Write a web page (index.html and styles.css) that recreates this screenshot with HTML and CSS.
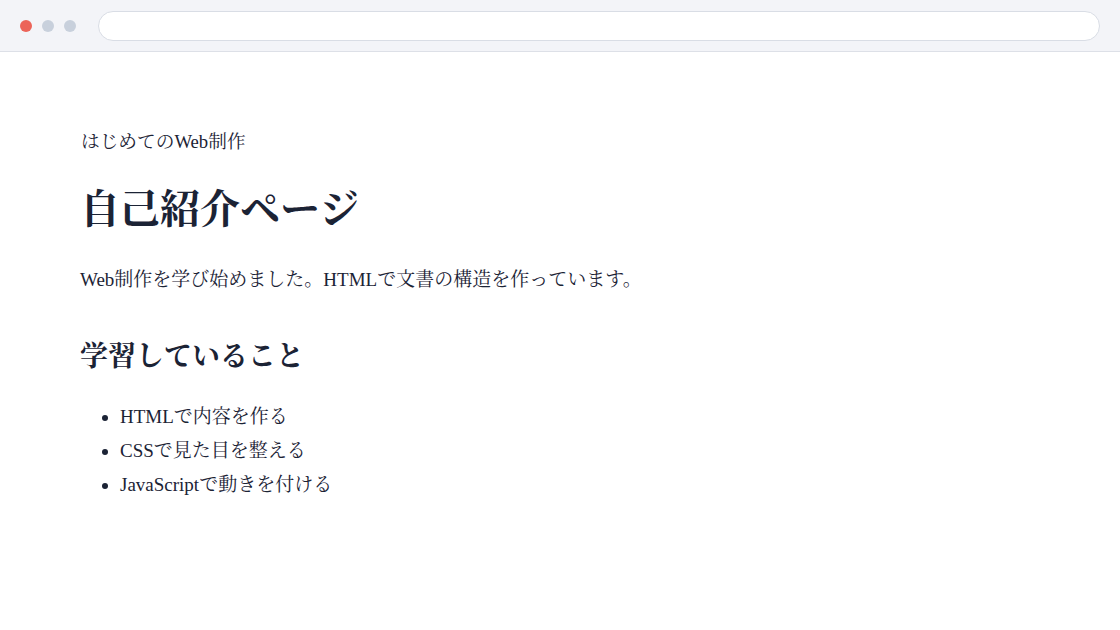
FILE: index.html
```html
<!DOCTYPE html>
<html lang="ja">
<head>
    <meta charset="UTF-8">
    <meta name="viewport" content="width=device-width, initial-scale=1.0">
    <title>自己紹介ページ</title>
    <link rel="stylesheet" href="styles.css">
</head>
<body>
    <div class="browser-bar">
        <div class="dots">
            <span class="dot red"></span>
            <span class="dot"></span>
            <span class="dot"></span>
        </div>
        <div class="address"></div>
    </div>

    <main class="page">
        <p class="lead">はじめてのWeb制作</p>
        <h1>自己紹介ページ</h1>
        <p class="intro">Web制作を学び始めました。HTMLで文書の構造を作っています。</p>

        <h2>学習していること</h2>
        <ul class="study-list">
            <li>HTMLで内容を作る</li>
            <li>CSSで見た目を整える</li>
            <li>JavaScriptで動きを付ける</li>
        </ul>
    </main>
</body>
</html>
```

FILE: styles.css
```css
*{
    margin: 0;
    padding: 0;
    box-sizing: border-box;
}
body{
    width: 1120px;
    height: 630px;
    overflow: hidden;
    background: #fff;
    color: #1b2335;
    font-family: "Liberation Serif", "Noto Serif CJK JP", "Noto Sans CJK JP", serif;
}
.browser-bar{
    height: 52px;
    display: flex;
    align-items: center;
    gap: 22px;
    padding: 0 20px;
    background: #f3f4f8;
    border-bottom: 1px solid #dde0e7;
}
.dots{
    display: flex;
    gap: 10px;
}
.dot{
    width: 12px;
    height: 12px;
    border-radius: 50%;
    background: #c8d0dc;
}
.dot.red{
    background: #ec6459;
}
.address{
    flex: 1;
    height: 30px;
    border: 1px solid #d9dde5;
    border-radius: 15px;
    background: #fff;
}
.page{
    padding: 77px 80px 0;
}
.lead{
    font-size: 18.7px;
    line-height: 26px;
    padding-left: 1px;
}
h1{
    margin-top: 28px;
    font-size: 40px;
    line-height: 54px;
    font-weight: bold;
}
.intro{
    margin-top: 28px;
    font-size: 19px;
    line-height: 30px;
}
h2{
    margin-top: 44px;
    font-size: 28px;
    line-height: 36px;
    font-weight: bold;
}
.study-list{
    margin-top: 25px;
    padding-left: 40px;
    font-size: 19px;
    line-height: 34px;
}
```
